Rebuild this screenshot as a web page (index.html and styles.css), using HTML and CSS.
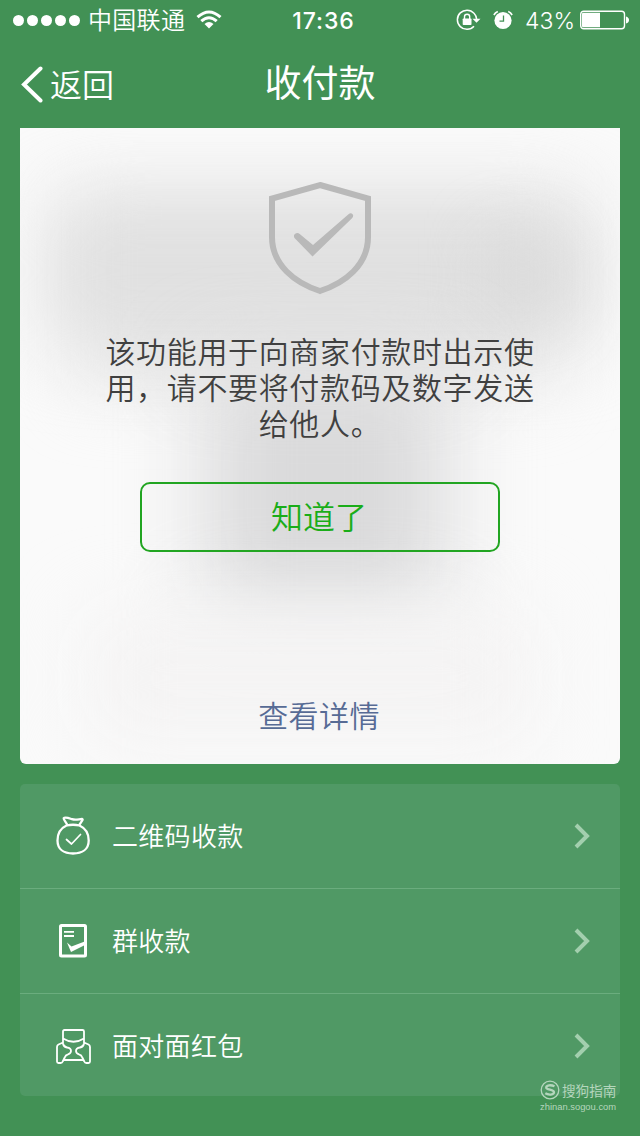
FILE: index.html
```html
<!DOCTYPE html>
<html lang="zh-CN">
<head>
<meta charset="utf-8">
<title>收付款</title>
<link rel="stylesheet" href="styles.css">
</head>
<body>
<header class="status">
  <div class="status-left">
    <span class="dots"><i></i><i></i><i></i><i></i><i></i></span>
    <span class="carrier">中国联通</span>
    <svg class="wifi" width="26" height="20" viewBox="0 0 26 20"><g fill="none" stroke="#fff" stroke-width="3"><path d="M1.500 7.200Q13-3.200 24.500 7.200"/><path d="M5.300 11.200Q13 4.200 20.700 11.200"/></g><path d="M8.500 14Q13 9.800 17.500 14L13 18.600Z" fill="#fff"/></svg>
  </div>
  <span class="time">17:36</span>
  <div class="status-right">
    <svg class="lock" width="25" height="22" viewBox="0 0 25 22"><path d="M18 4.200A9.600 9.600 0 1 0 18 17.300M18 4.200Q20.700 7 20.700 10.500" fill="none" stroke="#fff" stroke-width="1.500"/><path d="M16.500 9.800H24.500L20.500 13.700Z" fill="#fff"/><rect x="6.700" y="9.500" width="8.800" height="6.600" rx=".8" fill="#fff"/><path d="M8.500 10V7.800a2.600 2.600 0 0 1 5.200 0V10" fill="none" stroke="#fff" stroke-width="1.400"/></svg>
    <svg class="alarm" width="20" height="20" viewBox="0 0 20 20"><circle cx="10" cy="10.500" r="8.600" fill="#fff"/><path d="M.9 5A8 8 0 0 1 4.800 1.500M15.200 1.500A8 8 0 0 1 19.100 5" fill="none" stroke="#fff" stroke-width="1.700"/><path d="M10.500 5.500V11.200H6.500" fill="none" stroke="#429155" stroke-width="1.300"/></svg>
    <span class="percent">43%</span>
    <svg class="battery" width="50" height="20" viewBox="0 0 50 20"><rect x=".7" y="1.200" width="43.800" height="17.600" rx="3" fill="none" stroke="#fff" stroke-width="1.400"/><path d="M2 4Q2 2.800 3.200 2.800H20V17.200H3.200Q2 17.200 2 16Z" fill="#fff"/><path d="M46 6.500Q49 7.500 49 10T46 13.500Z" fill="#fff"/></svg>
  </div>
</header>
<nav class="nav">
  <a class="back"><svg width="24" height="38" viewBox="0 0 24 38"><path d="M20.500 3.500L4 19.500L20.500 35.500" fill="none" stroke="#fff" stroke-width="4" stroke-linecap="round"/></svg><span>返回</span></a>
  <h1 class="title">收付款</h1>
</nav>
<main class="content">
  <section class="card">
    <div class="haze"><i class="haze-base"></i><i class="haze-code"></i><i class="haze-end"></i><i class="haze-square"></i><i class="haze-warm"></i></div>
    <svg class="shield" width="104" height="114" viewBox="0 0 104 114"><path d="M52 4L100 17.500V56C100 84 77 102 52 110C27 102 4 84 4 56V17.500Z" fill="none" stroke="#b9b9b9" stroke-width="6"/><path d="M26.500 57Q25 54.500 27.200 52.800Q29.500 51.200 31.700 53L45 64L80.500 33.200Q83 31.500 84.600 33.300Q86 35 84 37.300L44.500 75.500Z" fill="#b9b9b9"/></svg>
    <p class="message">该功能用于向商家付款时出示使<br>用，请不要将付款码及数字发送<br>给他人。</p>
    <button class="confirm">知道了</button>
    <a class="details">查看详情</a>
  </section>
  <section class="list">
    <div class="row">
      <svg class="row-icon" width="36" height="40" viewBox="0 0 36 40"><g fill="none" stroke="#fff" stroke-width="2.300" stroke-linejoin="round" stroke-linecap="round"><path d="M11.500 9.500C5 12.500 2.500 18.500 2.500 24.500C2.500 33 8.500 37.500 18 37.500S33.700 33 33.700 24.500C33.700 18.500 31 12.500 24.500 9.500Q18 8 11.500 9.500Z"/><path d="M12.300 9C10.800 5.500 8.500 3.700 8.700 2.300C10 .7 14 2.200 17 3.200C21 4.500 24 3 27 2.900C28.700 3.200 26.500 5.500 24.300 9"/><path d="M11.500 23.500L16.500 28L25.500 18.500" stroke-width="1.700"/></g></svg>
      <span class="row-label">二维码收款</span><svg class="chevron" width="18" height="26" viewBox="0 0 18 26"><path d="M2 2L13 13L2 24" /></svg>
    </div>
    <div class="row">
      <svg class="row-icon" width="36" height="40" viewBox="0 0 36 40"><rect x="5.500" y="4.500" width="25" height="30.500" rx="1" fill="none" stroke="#fff" stroke-width="3"/><path d="M9 10.800H19M9 15H19" stroke="#fff" stroke-width="1.800"/><path d="M12 21.500L16.500 25.500L31 20V23.500L16 31Z" fill="#fff"/></svg>
      <span class="row-label">群收款</span><svg class="chevron" width="18" height="26" viewBox="0 0 18 26"><path d="M2 2L13 13L2 24" /></svg>
    </div>
    <div class="row">
      <svg class="row-icon" width="36" height="40" viewBox="0 0 36 40"><g fill="none" stroke="#fff" stroke-width="1.800" stroke-linejoin="round"><path d="M8 17.500V5.500Q8 4 9.500 4H27.500Q29 4 29 5.500V17.500M8 12.500Q18.500 19 29 12.500"/><path d="M8 16.500L3.500 18.500Q2 19.200 2 21V35.500Q2 37 3.500 37H5.700Q7.200 37 7.700 35.500L9.700 31.500Q10.500 29 13 28.300Q16 27.300 16 25Q16 22 12 21.500Q8.500 21 8 17.500"/><path d="M29 16.500L33.500 18.500Q35 19.200 35 21V35.500Q35 37 33.500 37H31.300Q29.800 37 29.300 35.500L27.300 31.500Q26.500 29 24 28.300Q21 27.300 21 25Q21 22 25 21.500Q28.500 21 29 17.500M9 34H28"/></g></svg>
      <span class="row-label">面对面红包</span><svg class="chevron" width="18" height="26" viewBox="0 0 18 26"><path d="M2 2L13 13L2 24" /></svg>
    </div>
  </section>
</main>
<div class="watermark">
  <div class="brand"><svg width="20" height="20" viewBox="0 0 20 20"><circle cx="10" cy="10" r="8.800" fill="none" stroke="currentColor" stroke-width="1.300"/><path d="M14.500 6.300C11 4.600 6 5 6.200 7.600C6.400 10 14 9.500 14 12.300C14 15 8.500 15.200 5.300 13.300" fill="none" stroke="currentColor" stroke-width="2.300"/></svg><span>搜狗指南</span></div>
  <div class="site">zhinan.sogou.com</div>
</div>
</body>
</html>
```
FILE: styles.css
```css
* { box-sizing: border-box; }
body {
  margin: 0;
  width: 640px;
  height: 1136px;
  overflow: hidden;
  position: relative;
  background: #429155;
  color: #fff;
  font-family: Inter, "Noto Sans CJK SC", sans-serif;
  font-weight: 350;
}
svg { display: block; flex: none; }
.status {
  height: 40px;
  display: grid;
  grid-template-columns: 1fr auto 1fr;
  align-items: center;
  padding: 0 10px 0 13px;
  font-size: 24px;
  line-height: 39px;
}
.status-left, .status-right { display: flex; align-items: center; }
.status-right { justify-content: flex-end; }
.dots { display: flex; gap: 3px; }
.dots i { width: 11px; height: 11px; border-radius: 50%; background: #fff; }
.carrier { margin-left: 8px; padding-top: 2px; line-height: 38px; letter-spacing: .3px; }
.wifi { margin-left: 11px; }
.time { padding: 2px 0 0 4px; line-height: 38px; font-weight: 500; font-size: 23px; letter-spacing: .9px; }
.lock { margin-right: 1px; }
.alarm { margin-left: 11px; }
.percent { margin-left: 12px; padding-top: 2px; line-height: 38px; font-size: 23px; font-weight: 350; }
.battery { margin-left: 5px; }
.nav {
  height: 88px;
  display: grid;
  grid-template-columns: 1fr auto 1fr;
  align-items: center;
  padding: 0 20px;
}
.back { display: flex; align-items: center; font-size: 32px; line-height: 48px; gap: 6px; }
.back span { padding-top: 3px; }
.title { margin: 0; font-size: 37px; line-height: 50px; font-weight: 400; }
.content { padding: 0 20px; }
.card {
  position: relative;
  height: 636px;
  display: flex;
  flex-direction: column;
  align-items: center;
  overflow: hidden;
  border-radius: 0 0 6px 6px;
  background: #fafafa;
  padding-top: 53px;
  isolation: isolate;
}
.haze { position: absolute; inset: 0; z-index: -1; }
.haze i { position: absolute; }
.haze-base { left: 60px; top: 80px; width: 470px; height: 180px; background: #eaeaea; filter: blur(34px); }
.haze-code { left: 30px; top: 70px; width: 545px; height: 145px; background: #e0e0e0; filter: blur(40px); }
.haze-end { left: 470px; top: 110px; width: 65px; height: 75px; background: #dadada; filter: blur(30px); }
.haze-square { left: 185px; top: 235px; width: 240px; height: 245px; background: #dadadb; filter: blur(42px); }
.haze-warm { left: 70px; top: 490px; width: 440px; height: 120px; background: #f4f3f3; filter: blur(40px); }
.message {
  margin: 39px 0 0;
  color: #404040;
  font-size: 30px;
  line-height: 36px;
  letter-spacing: .65px;
  text-align: center;
  white-space: nowrap;
}
.confirm {
  margin-top: 40px;
  width: 360px;
  height: 70px;
  padding: 0 2px 4px 0;
  border: 2px solid #22a522;
  border-radius: 10px;
  background: transparent;
  color: #1aad19;
  font: 350 32px/62px "Noto Sans CJK SC", sans-serif;
}
.details { margin-top: 142px; margin-right: 2px; color: #576b95; font-size: 30px; line-height: 44px; letter-spacing: .4px; }
.list { margin-top: 20px; border-radius: 5px; background: #509965; height: 312px; }
.row { height: 105px; display: flex; align-items: center; padding: 0 28px 0 35px; border-bottom: 1px solid #6bad7e; }
.row:last-child { border-bottom: 0; height: 104px; }
.row-label { flex: 1; margin-left: 21px; padding-top: 2px; font-size: 26px; line-height: 40px; letter-spacing: .3px; }
.chevron path { fill: none; stroke: #a3cfae; stroke-width: 4; }
.watermark { position: absolute; left: 540px; top: 1080px; color: #b5d6bd; font-weight: 400; }
.brand { display: flex; align-items: center; gap: 2px; height: 20px; font-size: 13.600px; }
.site { font-family: "Liberation Sans", sans-serif; font-size: 9.400px; line-height: 14px; }
```
